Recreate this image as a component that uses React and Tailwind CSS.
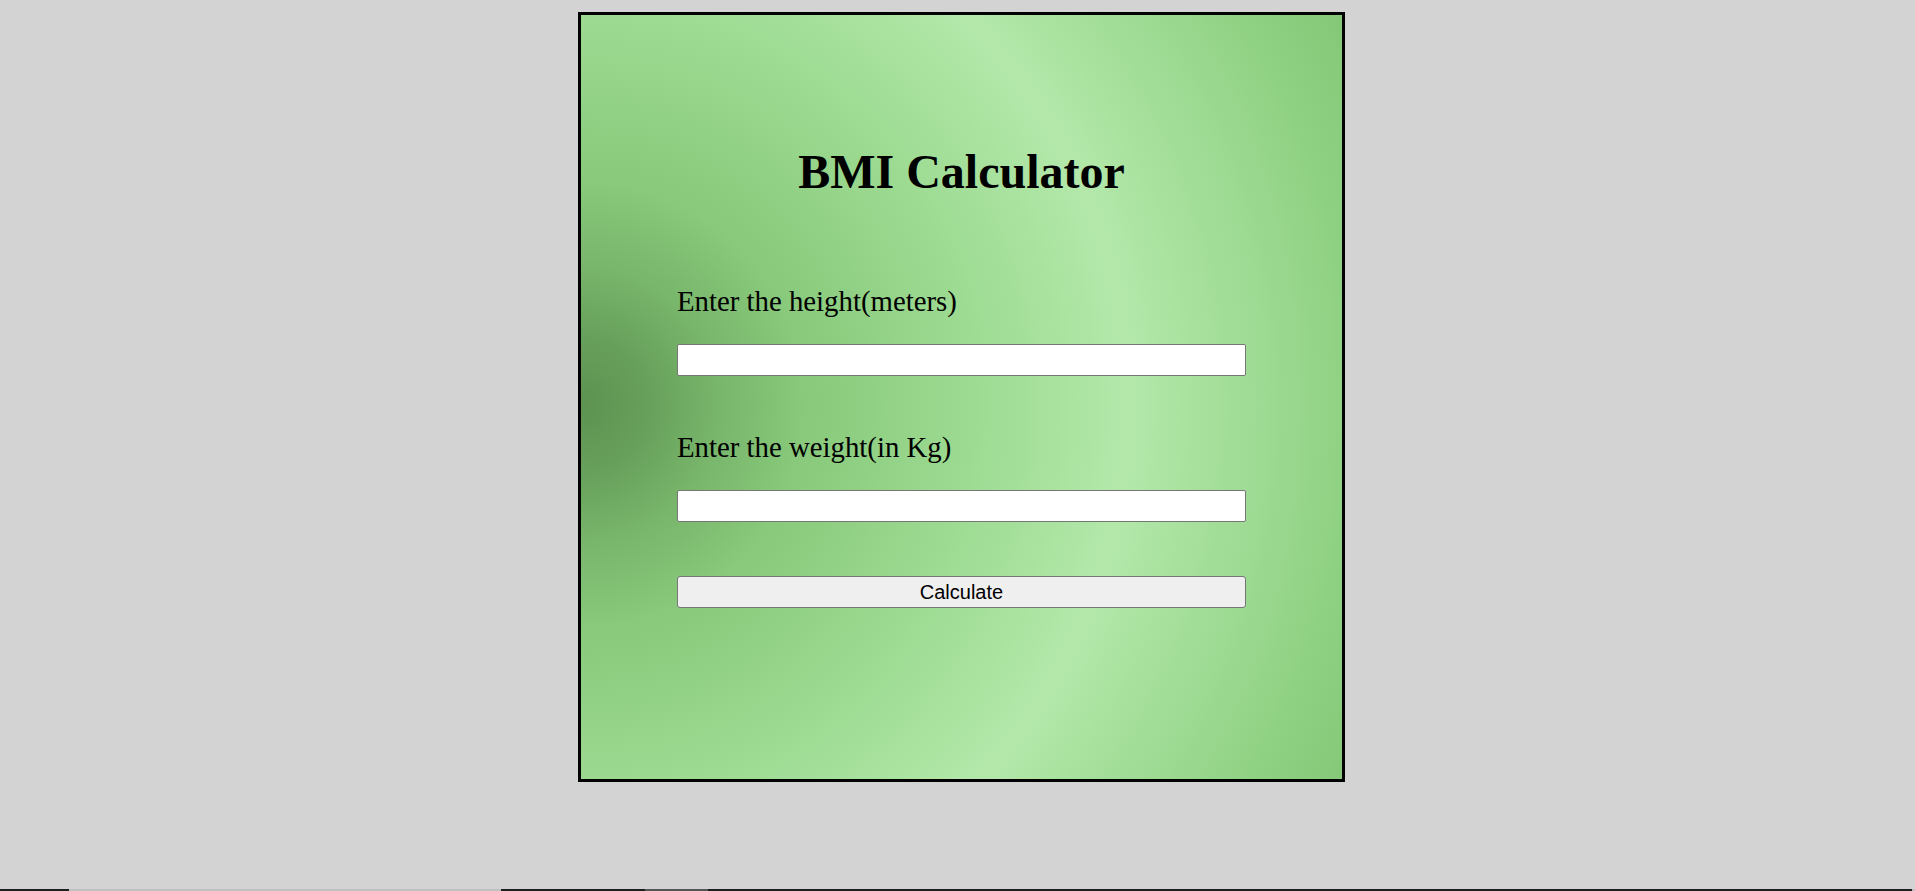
export default function App() {
  return (
    <div className="h-[891px] w-full bg-[#d3d3d3] flex flex-col overflow-hidden">
      <div className="ml-[578px] mt-[12px] w-[767px] h-[770px] box-border border-[3px] border-black bg-[radial-gradient(circle_at_0%_51%,#5d9250_0%,#67a05b_8%,#78b66b_16%,#88c97b_26%,#9ddb92_46%,#b3e8aa_64%,#8fd183_90%,#84c877_100%)] px-[96px] pt-[133px] text-black">
        <h1 className="text-center font-bold text-[48px] leading-[48px] font-['Liberation_Serif',serif]">
          BMI Calculator
        </h1>
        <div className="mt-[91px] text-[28.8px] leading-[29px] font-['Liberation_Serif',serif]">
          Enter the height(meters)
        </div>
        <input
          type="text"
          className="mt-[28px] block w-full h-[32px] box-border bg-white border border-[#767676] rounded-[2px]"
        />
        <div className="mt-[57px] text-[28.8px] leading-[29px] font-['Liberation_Serif',serif]">
          Enter the weight(in Kg)
        </div>
        <input
          type="text"
          className="mt-[28px] block w-full h-[32px] box-border bg-white border border-[#767676] rounded-[2px]"
        />
        <button
          type="button"
          className="mt-[54px] block w-full h-[32px] box-border bg-[#efefef] border border-[#767676] rounded-[3px] text-[20px] leading-[30px] text-black font-['Liberation_Sans',Arial,sans-serif]"
        >
          Calculate
        </button>
      </div>
      <div className="flex-1" />
      <div className="h-[2px] flex">
        <div className="w-[69px] bg-[#1e1e1e]" />
        <div className="w-[432px] bg-[#c0c0c0]" />
        <div className="w-[144px] bg-[#1e1e1e]" />
        <div className="w-[63px] bg-[#555555]" />
        <div className="flex-1 bg-[#1e1e1e]" />
        <div className="w-[3px] bg-[#c0c0c0]" />
      </div>
    </div>
  );
}
